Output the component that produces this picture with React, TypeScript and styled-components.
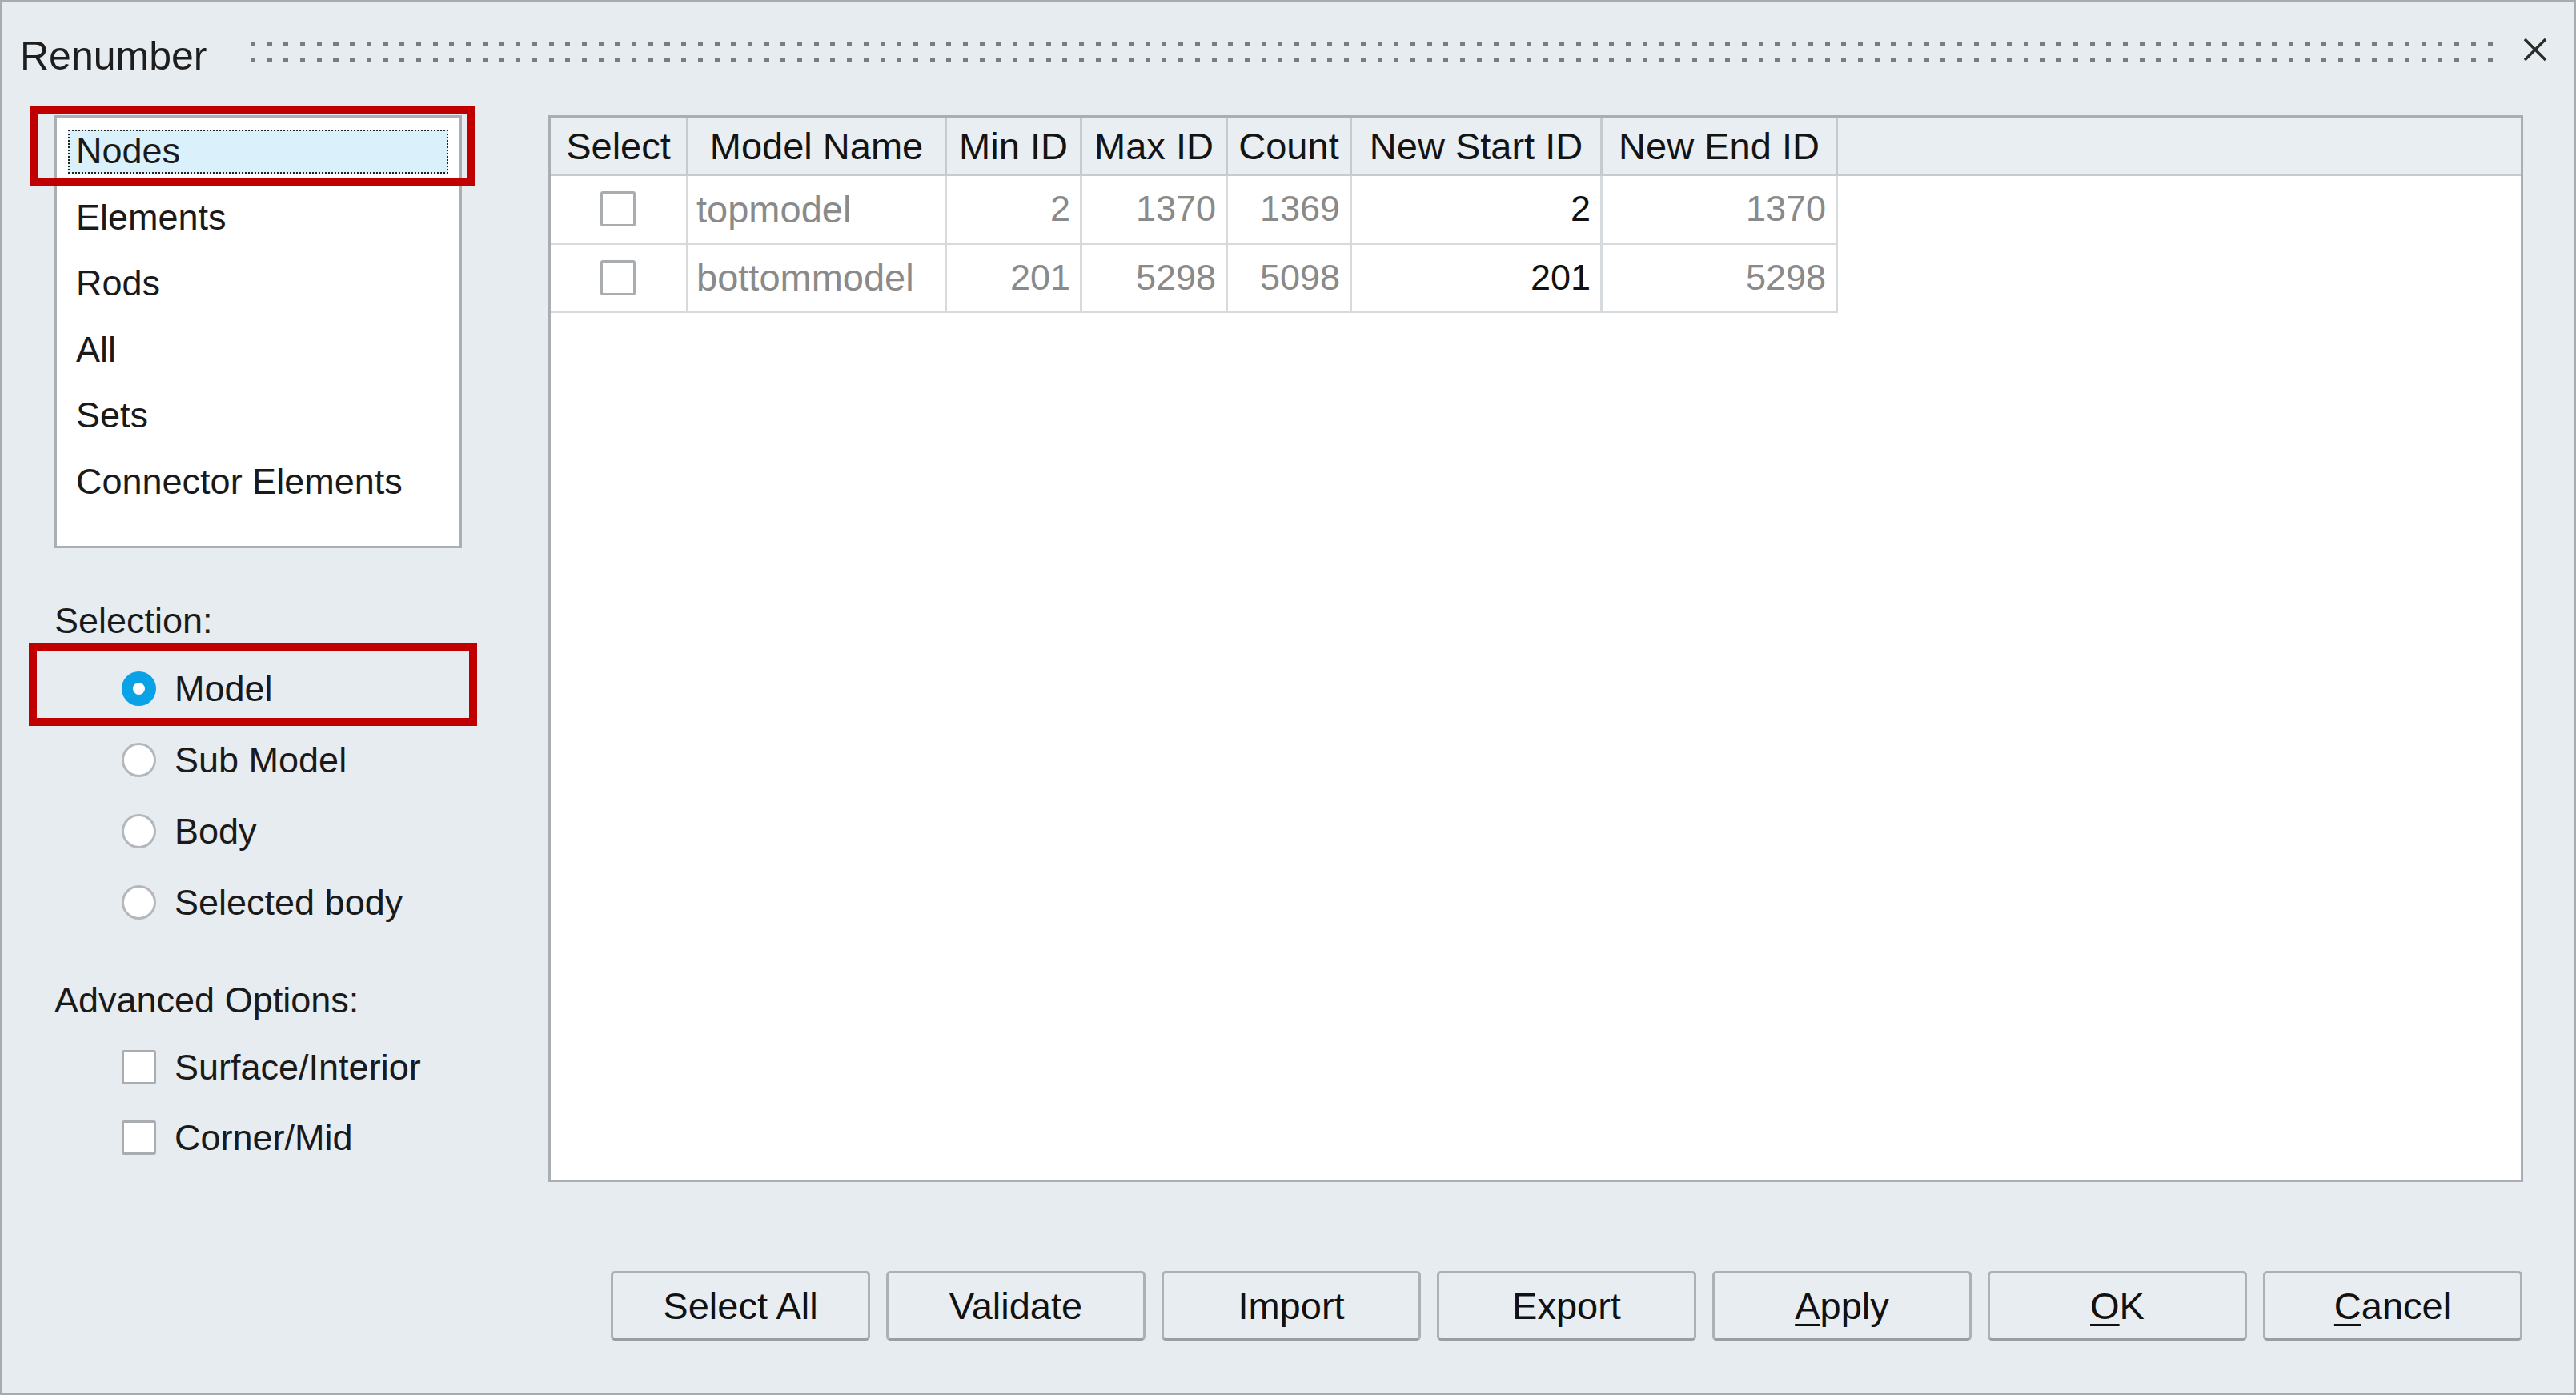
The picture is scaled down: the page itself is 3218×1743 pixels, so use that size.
import React from "react";
import styled, { createGlobalStyle, css } from "styled-components";

const GlobalStyle = createGlobalStyle`
  html, body {
    margin: 0;
    padding: 0;
  }
  body {
    font-family: "Liberation Sans", Arial, sans-serif;
    color: #1a1a1a;
    background: #e6ecf0;
  }
  * {
    box-sizing: border-box;
  }
`;

const Dialog = styled.div`
  width: 3218px;
  height: 1743px;
  border: 3px solid #a7abaf;
  background: #e6ecf0;
  display: flex;
  flex-direction: column;
  font-size: 45px;
`;

const TitleBar = styled.div`
  flex: none;
  height: 141px;
  display: flex;
  align-items: flex-start;
  padding: 38px 33px 0 22px;
`;

const Title = styled.div`
  font-size: 50px;
  line-height: normal;
  color: #1e1e1e;
`;

const Grip = styled.div`
  flex: 1;
  display: flex;
  flex-direction: column;
  gap: 14px;
  margin: 11px 25px 0 55px;
`;

const GripRow = styled.div`
  height: 6px;
  background: repeating-linear-gradient(to right, #7c7c7c 0 6px, transparent 6px 20.7px);
`;

const CloseButton = styled.button`
  width: 30px;
  height: 30px;
  margin-top: 6px;
  padding: 0;
  border: 0;
  background: transparent;
  display: flex;
`;

const Content = styled.div`
  flex: 1;
  display: flex;
  padding: 0 63px 0 65px;
`;

const LeftColumn = styled.div`
  width: 509px;
  flex: none;
  margin-right: 108px;
  display: flex;
  flex-direction: column;
`;

const ListBox = styled.div`
  height: 541px;
  border: 3px solid #abafb3;
  background: #fff;
  padding-top: 1px;
`;

const ListItem = styled.div`
  height: 82.5px;
  display: flex;
  align-items: center;
  padding: 0 14px;
`;

const ItemLabel = styled.div<{ $selected?: boolean }>`
  position: relative;
  flex: 1;
  height: 55px;
  display: flex;
  align-items: center;
  padding-left: 10px;
  ${(p) =>
    p.$selected &&
    css`
      padding-left: 8px;
      background: #daf1fb;
      border: 2px dotted #222;
    `}
`;

const Callout = styled.span<{ $t: number; $r: number; $b: number; $l: number }>`
  position: absolute;
  top: ${(p) => p.$t}px;
  right: ${(p) => p.$r}px;
  bottom: ${(p) => p.$b}px;
  left: ${(p) => p.$l}px;
  border: 10px solid #c00000;
  pointer-events: none;
`;

const SectionLabel = styled.div<{ $gap: number }>`
  line-height: 50px;
  margin-top: ${(p) => p.$gap}px;
`;

const OptionGroup = styled.div<{ $pad: number }>`
  padding-top: ${(p) => p.$pad}px;
  display: flex;
  flex-direction: column;
`;

const OptionRow = styled.div<{ $h: number }>`
  position: relative;
  height: ${(p) => p.$h}px;
  display: flex;
  align-items: center;
  gap: 23px;
  padding-left: 84px;
`;

const Radio = styled.span<{ $on?: boolean }>`
  width: 43px;
  height: 43px;
  border-radius: 50%;
  flex: none;
  background: #fff;
  border: 3px solid #b4b8bc;
  ${(p) =>
    p.$on &&
    css`
      border: 14px solid #0aa2e6;
    `}
`;

const Check = styled.span<{ $size?: number }>`
  width: ${(p) => p.$size ?? 43}px;
  height: ${(p) => p.$size ?? 43}px;
  flex: none;
  background: #fff;
  border: 3px solid #a9adb1;
  border-radius: 3px;
`;

const RightColumn = styled.div`
  flex: 1;
  display: flex;
  flex-direction: column;
`;

const Panel = styled.div`
  flex: 1;
  border: 3px solid #aaaeb2;
  background: #fff;
  overflow: hidden;
  font-size: 47px;
`;

const columns = "172px 323px 169px 182px 155px 313px 294px";

const HeaderRow = styled.div`
  display: grid;
  grid-template-columns: ${columns} 1fr;
  height: 73px;
  background: #e8eef1;
  border-bottom: 3px solid #c7cbcf;
`;

const HeadCell = styled.div`
  display: flex;
  align-items: center;
  justify-content: center;
  border-right: 3px solid #c6cacd;
  white-space: nowrap;
  color: #141414;
`;

const HeadFill = styled.div``;

const DataRow = styled.div`
  display: grid;
  grid-template-columns: ${columns};
  height: 85.5px;
`;

const Cell = styled.div<{ $align?: "left" | "right" | "center"; $strong?: boolean }>`
  display: flex;
  align-items: center;
  justify-content: ${(p) =>
    p.$align === "right" ? "flex-end" : p.$align === "center" ? "center" : "flex-start"};
  padding: 0 12px 0 10px;
  border-right: 3px solid #d7dadd;
  border-bottom: 3px solid #d7dadd;
  color: ${(p) => (p.$strong ? "#111" : "#8a8a8a")};
  font-size: ${(p) => (p.$align === "right" ? 45 : 47)}px;
  white-space: nowrap;
`;

const ButtonRow = styled.div`
  display: flex;
  justify-content: flex-end;
  gap: 20px;
  margin: 111px 1px 65px 0;
`;

const Button = styled.button`
  width: 324px;
  height: 87px;
  border: 3px solid #adb1b5;
  border-bottom-color: #9a9ea2;
  border-radius: 5px;
  background: #e7edf1;
  font-family: "Liberation Sans", Arial, sans-serif;
  font-size: 47px;
  color: #111;
  padding: 0;

  u {
    text-decoration-thickness: 3px;
    text-underline-offset: 6px;
  }
`;

const items = ["Nodes", "Elements", "Rods", "All", "Sets", "Connector Elements"];
const radios = ["Model", "Sub Model", "Body", "Selected body"];
const headers = ["Select", "Model Name", "Min ID", "Max ID", "Count", "New Start ID", "New End ID"];
const rows = [
  { name: "topmodel", min: 2, max: 1370, count: 1369, start: 2, end: 1370 },
  { name: "bottommodel", min: 201, max: 5298, count: 5098, start: 201, end: 5298 },
];

const App: React.FC = () => {
  return (
    <>
      <GlobalStyle />
      <Dialog>
        <TitleBar>
          <Title>Renumber</Title>
          <Grip>
            <GripRow />
            <GripRow />
          </Grip>
          <CloseButton aria-label="Close">
            <svg width="30" height="30" viewBox="0 0 30 30">
              <path d="M2 2 L28 28 M28 2 L2 28" stroke="#2b2b2b" strokeWidth="3.5" />
            </svg>
          </CloseButton>
        </TitleBar>

        <Content>
          <LeftColumn>
            <ListBox>
              {items.map((it, i) => (
                <ListItem key={it}>
                  <ItemLabel $selected={i === 0}>
                    {it}
                    {i === 0 && <Callout $t={-32} $r={-36} $b={-17} $l={-49} />}
                  </ItemLabel>
                </ListItem>
              ))}
            </ListBox>

            <SectionLabel $gap={66}>Selection:</SectionLabel>
            <OptionGroup $pad={15}>
              {radios.map((r, i) => (
                <OptionRow key={r} $h={89}>
                  <Radio $on={i === 0} />
                  {r}
                  {i === 0 && <Callout $t={-12.5} $r={-19} $b={-1.5} $l={-32} />}
                </OptionRow>
              ))}
            </OptionGroup>

            <SectionLabel $gap={53}>Advanced Options:</SectionLabel>
            <OptionGroup $pad={14.6}>
              <OptionRow $h={88}>
                <Check />
                Surface/Interior
              </OptionRow>
              <OptionRow $h={88}>
                <Check />
                Corner/Mid
              </OptionRow>
            </OptionGroup>
          </LeftColumn>

          <RightColumn>
            <Panel>
              <HeaderRow>
                {headers.map((h) => (
                  <HeadCell key={h}>{h}</HeadCell>
                ))}
                <HeadFill />
              </HeaderRow>
              {rows.map((r) => (
                <DataRow key={r.name}>
                  <Cell $align="center">
                    <Check $size={44} />
                  </Cell>
                  <Cell>{r.name}</Cell>
                  <Cell $align="right">{r.min}</Cell>
                  <Cell $align="right">{r.max}</Cell>
                  <Cell $align="right">{r.count}</Cell>
                  <Cell $align="right" $strong>
                    {r.start}
                  </Cell>
                  <Cell $align="right">{r.end}</Cell>
                </DataRow>
              ))}
            </Panel>

            <ButtonRow>
              <Button>Select All</Button>
              <Button>Validate</Button>
              <Button>Import</Button>
              <Button>Export</Button>
              <Button>
                <u>A</u>pply
              </Button>
              <Button>
                <u>O</u>K
              </Button>
              <Button>
                <u>C</u>ancel
              </Button>
            </ButtonRow>
          </RightColumn>
        </Content>
      </Dialog>
    </>
  );
};

export default App;
